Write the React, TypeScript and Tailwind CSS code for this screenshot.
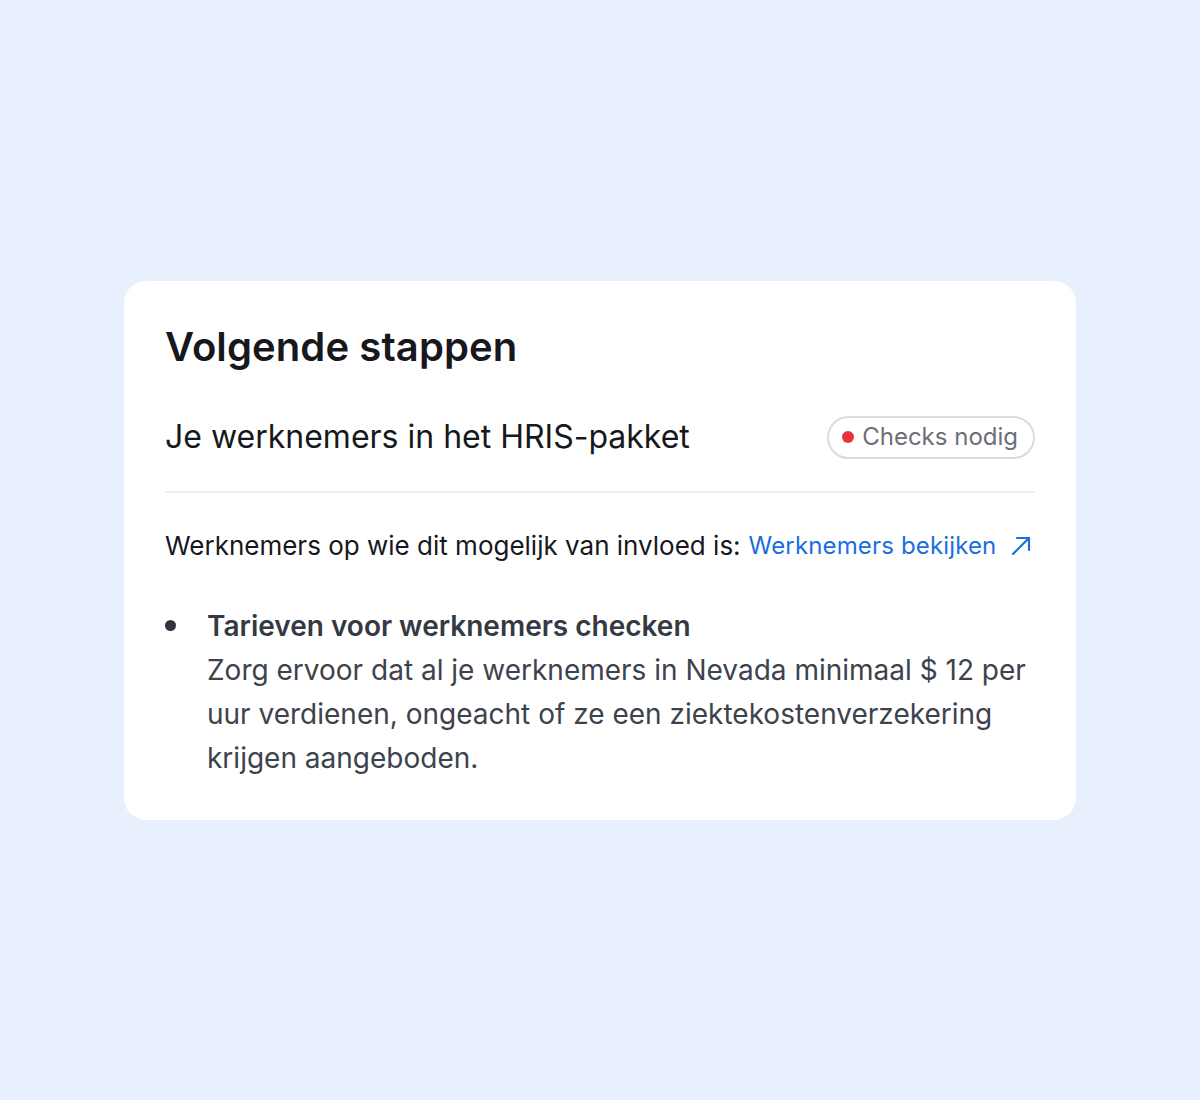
import React from "react";

export default function App() {
  return (
    <div className="min-h-[1100px] w-full bg-[#e9f0fd] flex items-center justify-center" style={{ fontFamily: "Inter, 'Noto Sans', sans-serif" }}>
      <div className="w-[952px] bg-white rounded-[22px] px-[41px] pt-[42px] pb-[40px]">
        <h1 className="text-[40px] leading-[48px] font-semibold text-[#16181c] tracking-[0.1px]">Volgende stappen</h1>

        <div className="mt-[45px] flex items-center justify-between">
          <h2 className="text-[32px] leading-[42px] text-[#16181c]">Je werknemers in het HRIS-pakket</h2>
          <div className="h-[43px] flex items-center gap-[8px] rounded-full border-2 border-[#d9dbde] pl-[13px] pr-[15px]">
            <span className="w-[12px] h-[12px] rounded-full bg-[#e8333d]" />
            <span className="text-[24px] text-[#6b6f76]">Checks nodig</span>
          </div>
        </div>

        <div className="mt-[32px] h-[2px] bg-[#ebecee]" />

        <p className="mt-[37px] leading-[32px] text-[#16181c] flex items-center">
          <span className="text-[26px]">Werknemers op wie dit mogelijk van invloed is:</span>
          <a className="ml-[8px] text-[24px] tracking-[0.15px] text-[#1a6fdc] flex items-center gap-[14px]" href="#">
            Werknemers bekijken
            <svg width="22" height="22" viewBox="0 0 22 22" fill="none" stroke="#1a6fdc" strokeWidth="2.2" strokeLinecap="round" strokeLinejoin="round">
              <path d="M3 19L19 3" />
              <path d="M7 3H19V15" />
            </svg>
          </a>
        </p>

        <ul className="mt-[42px] flex flex-col">
          <li className="flex gap-[31px]">
            <span className="mt-[16px] w-[11px] h-[11px] rounded-full bg-[#2e3540] shrink-0" />
            <div className="text-[28px] leading-[44px] text-[#3c434d]">
              <div className="font-semibold text-[#333a44]">Tarieven voor werknemers checken</div>
              <div>Zorg ervoor dat al je werknemers in Nevada minimaal $ 12 per uur verdienen, ongeacht of ze een ziektekostenverzekering krijgen aangeboden.</div>
            </div>
          </li>
        </ul>
      </div>
    </div>
  );
}
